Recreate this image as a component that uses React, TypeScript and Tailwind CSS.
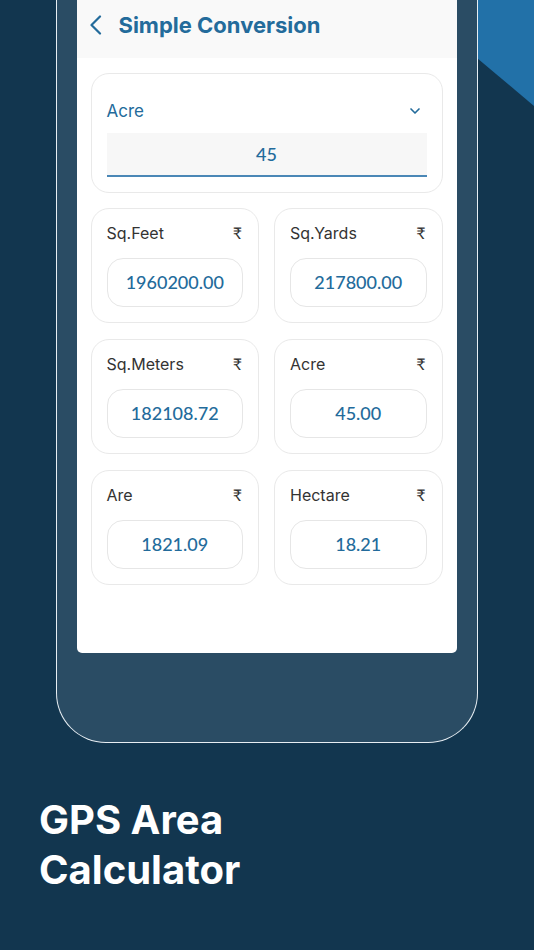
import { ChevronDown } from 'lucide-react';

const units = [
  { label: 'Sq.Feet', value: '1960200.00' },
  { label: 'Sq.Yards', value: '217800.00' },
  { label: 'Sq.Meters', value: '182108.72' },
  { label: 'Acre', value: '45.00' },
  { label: 'Are', value: '1821.09' },
  { label: 'Hectare', value: '18.21' },
];

const inter = { fontFamily: 'Inter, "Noto Sans", sans-serif' };

function UnitCard({ label, value }: { label: string; value: string }) {
  return (
    <div className="h-[115px] rounded-[18px] border border-[#e9e9e9] bg-white px-[15px] pt-[13px]">
      <div className="flex items-center justify-between leading-[22px]">
        <span className="text-[16px] text-[#333333]" style={inter}>{label}</span>
        <span className="text-[16px] text-[#333333] pr-[1px]">₹</span>
      </div>
      <div className="mt-[14px] h-[49px] rounded-[16px] border border-[#e6e6e6] flex items-center justify-center text-[18px] font-medium text-[#236b9b]">
        {value}
      </div>
    </div>
  );
}

export default function App() {
  return (
    <div
      className="relative w-[534px] h-[950px] overflow-hidden bg-[#12364f]"
      style={{ fontFamily: 'Lato, "Noto Sans", sans-serif' }}
    >
      {/* corner decoration */}
      <svg className="absolute top-0 right-0" width="57" height="106" viewBox="0 0 57 106">
        <polygon points="0,0 57,0 57,106 0,58" fill="#2271a8" />
      </svg>

      {/* phone frame */}
      <div className="relative ml-[56px] w-[422px] h-[743px] rounded-b-[50px] border-x-[1.5px] border-b-[1.5px] border-[#e7eef3] bg-[#2a4c64] px-[19.5px]">
        <div className="w-[380px] h-[653px] rounded-b-[5px] bg-white">
          <div className="h-[58px] bg-[#f9f9f9] flex items-center pl-[12px] pb-[8px]">
            <svg width="13" height="20" viewBox="0 0 13 20" fill="none">
              <polyline points="11,1.5 2.5,10 11,18.5" stroke="#236b9b" strokeWidth="2.2" strokeLinecap="round" strokeLinejoin="round" />
            </svg>
            <span className="ml-[17px] text-[22px] font-bold text-[#236b9b]" style={inter}>
              Simple Conversion
            </span>
          </div>

          <div className="px-[14px] pt-[15px]">
            <div className="h-[120px] rounded-[18px] border border-[#e9e9e9] px-[15px] pt-[26px]">
              <div className="flex items-center justify-between leading-[22px]">
                <span className="text-[17px] text-[#236b9b]" style={inter}>Acre</span>
                <ChevronDown className="w-[16px] h-[16px] text-[#236b9b] mr-[4px]" strokeWidth={2.5} />
              </div>
              <div className="mt-[11px] h-[44px] bg-[#f7f7f7] border-b-2 border-[#4a87b6] flex items-center justify-center text-[18px] font-medium text-[#236b9b]">
                45
              </div>
            </div>

            <div className="mt-[15px] grid grid-cols-2 gap-x-[15px] gap-y-[16px]">
              {units.map((u) => (
                <UnitCard key={u.label} label={u.label} value={u.value} />
              ))}
            </div>
          </div>
        </div>
      </div>

      <h1 className="mt-[52px] ml-[39px] text-[40px] leading-[50px] font-bold text-white" style={inter}>
        GPS Area
        <br />
        Calculator
      </h1>
    </div>
  );
}
